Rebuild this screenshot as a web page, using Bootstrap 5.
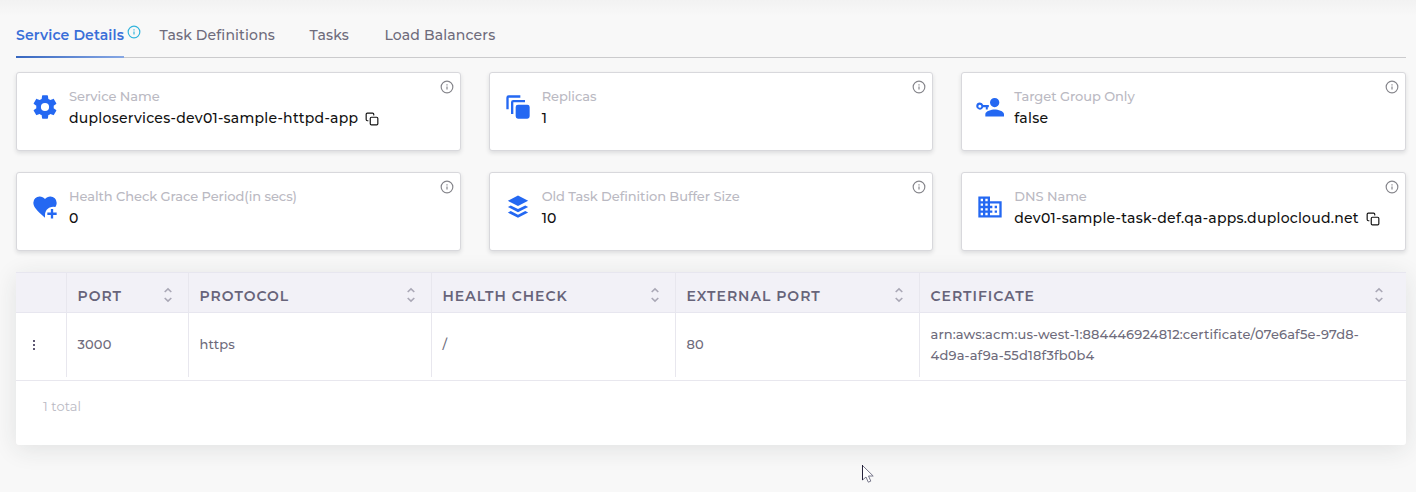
<!DOCTYPE html>
<html lang="en">
<head>
<meta charset="utf-8">
<meta name="viewport" content="width=device-width, initial-scale=1">
<title>Service Details</title>
<link href="https://cdn.jsdelivr.net/npm/bootstrap@5.3.0/dist/css/bootstrap.min.css" rel="stylesheet">
<style>
  body { font-family: Montserrat, Inter, sans-serif; font-size: 14px; font-weight: 500; color: #6e6b7b; background: #f8f8f8; overflow: hidden; height: 492px; }
  .page-top { height: 16px; background: linear-gradient(#f2f2f2, #f8f8f8); }
  .page-body { padding: 0 10px 0 16px; }
  .tabs-bar { height: 42px; border-bottom: 1px solid #cbcbcd; margin-bottom: 14px; }
  .tabs-bar .nav-link { height: 42px; padding: 9px 0 0; line-height: 20px; color: #6e6b7b; letter-spacing: .15px; border-radius: 0; white-space: nowrap; }
  .tabs-bar .nav-link.active { color: #3a6fd8; font-weight: 600; letter-spacing: .13px; width: 108px; background: linear-gradient(90deg, #3767c0, #86a7e4) bottom / 100% 2px no-repeat; }
  .tabs-bar .t-def { width: 150px; }
  .tabs-bar .t-tasks { width: 75px; }
  .tab-info { margin: 9px 18.500px 0 3px; }
  .cards-row { --bs-gutter-x: 28px; --bs-gutter-y: 21px; }
  .info-card { height: 79px; border: 1px solid #d8d8dc; border-radius: 3px; box-shadow: 0 2px 4px rgba(34,41,47,.13); padding: 13px 0 0 14px; }
  .info-card .lbl { line-height: 21px; font-size: 13px; color: #bab9c2; letter-spacing: -.06px; white-space: nowrap; }
  .info-card .val { line-height: 22px; color: #111; letter-spacing: .26px; white-space: nowrap; }
  .card-ico { width: 28px; height: 28px; fill: #2468f2; margin: 7px 10px 0 0; flex: none; }
  .copy-ico { margin-left: 2.700px; }
  .info-dot { top: 7px; right: 6px; }
  .grid-panel { margin-top: 21px; height: 173px; background: #fff; border-radius: 3px; box-shadow: 0 4px 24px rgba(34,41,47,.11); }
  .grid-panel table { table-layout: fixed; width: 100%; margin: 0; border-collapse: separate; border-spacing: 0; }
  .grid-panel th { height: 41px; padding: 7px 0 0 10.500px; background: #f2f1f7; border-top: 1px solid #e7e6ef; border-bottom: 1px solid #e7e6ef; color: #67647a; font-weight: 600; letter-spacing: 1px; white-space: nowrap; line-height: 20px; vertical-align: middle; }
  .grid-panel td { height: 64px; padding: 0 0 2px 10.500px; line-height: 21px; font-size: 13px; letter-spacing: .13px; vertical-align: middle; }
  .grid-panel td:last-child { padding-bottom: 0; }
  .grid-panel th:not(:last-child), .grid-panel td:not(:last-child) { border-right: 1px solid #e8e7ee; }
  .c-menu { width: 51px; } .c-port { width: 122px; } .c-first { width: 243px; } .c-mid { width: 244px; }
  .sorter { margin: 1px 15.500px 0 0; }
  th:last-child .sorter { margin-right: 22.500px; }
  .total-line { margin-top: 3px; border-top: 1px solid #e8e7ee; padding: 15px 0 0 27px; color: #b9b9c3; font-weight: 400; line-height: 21px; font-size: 13px; letter-spacing: .1px; }
  .pointer { left: 861px; top: 464px; }
</style>
</head>
<body>
<svg class="d-none">
  <symbol id="info" viewBox="0 0 24 24"><circle cx="12" cy="12" r="10" fill="none" stroke="currentColor" stroke-width="2"/><path d="M12 11.2v5.2M12 7.3v2" fill="none" stroke="currentColor" stroke-width="2"/></symbol>
  <symbol id="copy" viewBox="0 0 24 24"><g fill="none" stroke="currentColor" stroke-width="2" stroke-linecap="round" stroke-linejoin="round"><rect x="9" y="9" width="13" height="13" rx="2"/><path d="M5 15H4a2 2 0 0 1-2-2V4a2 2 0 0 1 2-2h9a2 2 0 0 1 2 2v1"/></g></symbol>
  <symbol id="sort" viewBox="0 0 10 16"><path d="M1.700 5 5 1.900 8.300 5M1.700 11 5 14.100 8.300 11" fill="none" stroke="#aaa8b6" stroke-width="1.600"/></symbol>
</svg>
<div class="page-top"></div>
<main class="page-body">
  <nav class="nav tabs-bar flex-nowrap">
    <a class="nav-link active" href="#">Service Details</a>
    <svg class="tab-info" width="14" height="14" color="#32b4dc"><use href="#info"/></svg>
    <a class="nav-link t-def" href="#">Task Definitions</a>
    <a class="nav-link t-tasks" href="#">Tasks</a>
    <a class="nav-link" href="#">Load Balancers</a>
  </nav>
  <div class="row cards-row">
    <div class="col-4"><div class="info-card bg-white d-flex position-relative">
      <svg class="card-ico" viewBox="0 0 24 24"><path d="M12 15.500A3.500 3.500 0 0 1 8.500 12 3.500 3.500 0 0 1 12 8.500a3.500 3.500 0 0 1 3.500 3.500 3.500 3.500 0 0 1-3.500 3.500m7.430-2.530c.04-.32.07-.64.07-.97s-.03-.66-.07-1l2.110-1.630c.19-.15.24-.42.12-.64l-2-3.460c-.12-.22-.39-.31-.61-.22l-2.490 1c-.52-.39-1.060-.73-1.690-.98l-.37-2.650A.506.506 0 0 0 14 2h-4c-.25 0-.46.18-.5.42l-.37 2.650c-.63.25-1.170.59-1.690.98l-2.490-1c-.22-.09-.49 0-.61.22l-2 3.460c-.13.22-.07.49.12.64L4.570 11c-.04.34-.07.67-.07 1s.03.65.07.97l-2.110 1.660c-.19.15-.25.42-.12.64l2 3.460c.12.22.39.3.61.22l2.490-1.010c.52.4 1.060.74 1.690.99l.37 2.650c.04.24.25.42.5.42h4c.25 0 .46-.18.5-.42l.37-2.650c.63-.26 1.170-.59 1.690-.99l2.490 1.010c.22.08.49 0 .61-.22l2-3.460c.12-.22.07-.49-.12-.64z"/></svg>
      <div><div class="lbl">Service Name</div><div class="val">duploservices-dev01-sample-httpd-app <svg class="copy-ico" width="14" height="14"><use href="#copy"/></svg></div></div>
      <svg class="info-dot position-absolute" width="14" height="14" color="#85858b"><use href="#info"/></svg>
    </div></div>
    <div class="col-4"><div class="info-card bg-white d-flex position-relative">
      <svg class="card-ico" viewBox="0 0 24 24"><path d="M12 10h8a2 2 0 0 1 2 2v8a2 2 0 0 1-2 2h-8a2 2 0 0 1-2-2v-8a2 2 0 0 1 2-2M2 14V4a2 2 0 0 1 2-2h10v2H4v10zM6 18V8a2 2 0 0 1 2-2h10v2H8v10z"/></svg>
      <div><div class="lbl">Replicas</div><div class="val">1</div></div>
      <svg class="info-dot position-absolute" width="14" height="14" color="#85858b"><use href="#info"/></svg>
    </div></div>
    <div class="col-4"><div class="info-card bg-white d-flex position-relative">
      <svg class="card-ico" viewBox="0 0 24 24"><path d="M16 12.200a4 4 0 1 0 0-8 4 4 0 0 0 0 8m0 2c-2.700 0-8 1.350-8 4v2h16v-2c0-2.650-5.300-4-8-4M3.300 8.100a3.100 3.100 0 1 0 2.900 4.200h2.200v1.900h1.700v-1.900H11v-2H6.200a3.100 3.100 0 0 0-2.900-2.200m0 4.500a1.300 1.300 0 1 1 0-2.600 1.300 1.300 0 0 1 0 2.600"/></svg>
      <div><div class="lbl">Target Group Only</div><div class="val">false</div></div>
      <svg class="info-dot position-absolute" width="14" height="14" color="#85858b"><use href="#info"/></svg>
    </div></div>
    <div class="col-4"><div class="info-card bg-white d-flex position-relative">
      <svg class="card-ico" viewBox="0 0 24 24"><path transform="translate(0 .6)" d="M12 20.700 10.550 19.400C5.400 14.700 2 11.600 2 7.850A5.400 5.400 0 0 1 7.500 2.400c1.700 0 3.400.8 4.500 2.100 1.100-1.300 2.800-2.100 4.500-2.100A5.400 5.400 0 0 1 22 7.850c0 1.400-.4 2.600-1.100 3.600A7 7 0 0 0 12 18.500zM17 13.200v3h-3v2h3v3h2v-3h3v-2h-3v-3z"/></svg>
      <div><div class="lbl">Health Check Grace Period(in secs)</div><div class="val">0</div></div>
      <svg class="info-dot position-absolute" width="14" height="14" color="#85858b"><use href="#info"/></svg>
    </div></div>
    <div class="col-4"><div class="info-card bg-white d-flex position-relative">
      <svg class="card-ico" viewBox="0 0 24 24"><path d="M12 2.200 20.700 6.700 12 11.200 3.300 6.700zM5.800 10.700 12 13.800l6.200-3.100 2.500 1.300-8.700 4.400L3.300 12zM5.800 15.500 12 18.600l6.200-3.100 2.500 1.300-8.700 4.400-8.700-4.400z"/></svg>
      <div><div class="lbl">Old Task Definition Buffer Size</div><div class="val">10</div></div>
      <svg class="info-dot position-absolute" width="14" height="14" color="#85858b"><use href="#info"/></svg>
    </div></div>
    <div class="col-4"><div class="info-card bg-white d-flex position-relative">
      <svg class="card-ico" viewBox="0 0 24 24"><path d="M18 15h-2v2h2m0-6h-2v2h2m2 6h-8v-2h2v-2h-2v-2h2v-2h-2V9h8M10 7H8V5h2m0 6H8V9h2m0 6H8v-2h2m0 6H8v-2h2M6 7H4V5h2m0 6H4V9h2m0 6H4v-2h2m0 6H4v-2h2m6-10V3H2v18h20V7z"/></svg>
      <div><div class="lbl">DNS Name</div><div class="val">dev01-sample-task-def.qa-apps.duplocloud.net <svg class="copy-ico" width="14" height="14"><use href="#copy"/></svg></div></div>
      <svg class="info-dot position-absolute" width="14" height="14" color="#85858b"><use href="#info"/></svg>
    </div></div>
  </div>
  <section class="grid-panel">
    <table>
      <colgroup><col class="c-menu"><col class="c-port"><col class="c-first"><col class="c-mid"><col class="c-mid"><col></colgroup>
      <thead><tr>
        <th></th>
        <th><div class="d-flex justify-content-between"><span>PORT</span><svg class="sorter" width="10" height="16"><use href="#sort"/></svg></div></th>
        <th><div class="d-flex justify-content-between"><span>PROTOCOL</span><svg class="sorter" width="10" height="16"><use href="#sort"/></svg></div></th>
        <th><div class="d-flex justify-content-between"><span>HEALTH CHECK</span><svg class="sorter" width="10" height="16"><use href="#sort"/></svg></div></th>
        <th><div class="d-flex justify-content-between"><span>EXTERNAL PORT</span><svg class="sorter" width="10" height="16"><use href="#sort"/></svg></div></th>
        <th><div class="d-flex justify-content-between"><span>CERTIFICATE</span><svg class="sorter" width="10" height="16"><use href="#sort"/></svg></div></th>
      </tr></thead>
      <tbody><tr>
        <td><svg class="d-block" width="14" height="14" viewBox="0 0 14 14" fill="#5e5873"><path d="M6 3h2v2H6zM6 7h2v2H6zM6 11h2v2H6z"/></svg></td>
        <td>3000</td><td>https</td><td>/</td><td>80</td>
        <td>arn:aws:acm:us-west-1:884446924812:certificate/07e6af5e-97d8-<br>4d9a-af9a-55d18f3fb0b4</td>
      </tr></tbody>
    </table>
    <div class="total-line">1 total</div>
  </section>
</main>
<svg class="pointer position-absolute" width="14" height="20" viewBox="0 0 14 20"><path d="M1.500 1.500v14.500l3.500-3 2.300 5.200 2.500-1.100-2.300-5.100h4.700z" fill="#fff" stroke="#77778a"/><path d="M1.500 1v15" stroke="#25223a"/></svg>
<script src="https://cdn.jsdelivr.net/npm/bootstrap@5.3.0/dist/js/bootstrap.bundle.min.js"></script>
</body>
</html>
